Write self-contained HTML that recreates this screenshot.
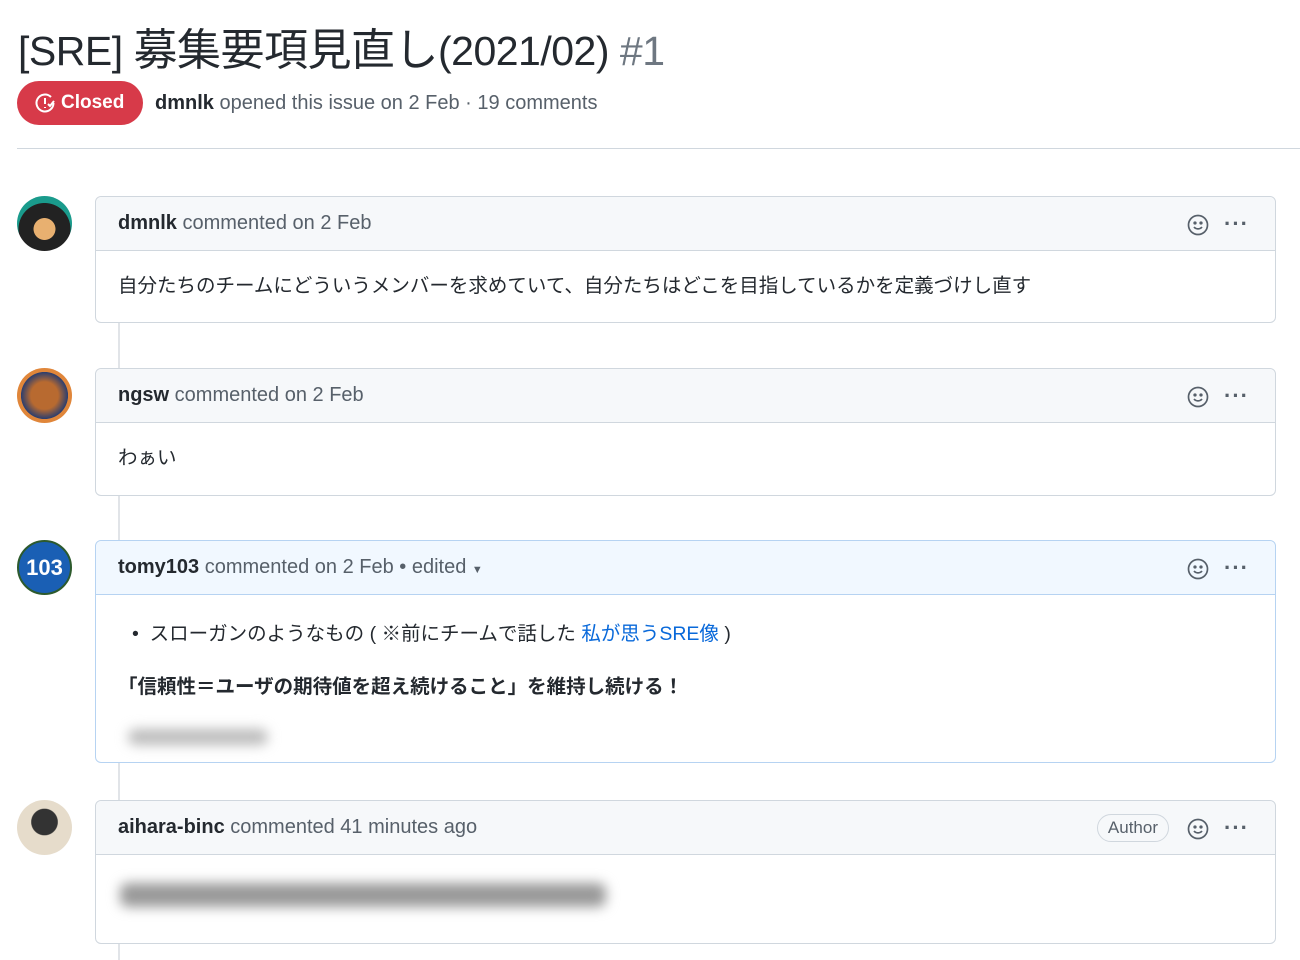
<!DOCTYPE html><html><head><meta charset="utf-8"><style>
body{margin:0;width:1300px;height:960px;overflow:hidden;background:#fff;font-family:"Liberation Sans","Noto Sans CJK JP",sans-serif;color:#24292f;position:relative}
.a{position:absolute}
h1{position:absolute;left:18px;top:14px;margin:0;font-weight:400;font-size:41px;letter-spacing:-0.5px;white-space:nowrap}
h1 .n{color:#6e7781}
h1 .j{font-size:44px}
.badge{left:17px;top:81px;width:126px;height:44px;border-radius:22px;background:#d73a49;color:#fff;font-size:19px;font-weight:700;line-height:44px}
.meta{left:155px;top:92px;font-size:20px;color:#57606a;white-space:nowrap}
.meta b{color:#24292f}
.hr{left:17px;top:148px;width:1283px;height:1px;background:#d0d7de}
.line{left:118px;width:2px;background:#e1e4e8}
.av{left:17px;width:55px;height:55px;border-radius:50%}
.box{left:95px;width:1179px;border:1px solid #d0d7de;border-radius:6px;background:#fff}
.hd{height:53px;background:#f6f8fa;border-bottom:1px solid #d0d7de;border-radius:6px 6px 0 0;font-size:20px;color:#57606a;line-height:53px;padding-left:22px;position:relative;white-space:nowrap}
.hd b{color:#24292f}
.blue{border-color:#b6d3f2}.blue .hd{background:#f1f8ff;border-color:#b6d3f2}
.ic{position:absolute;right:66px;top:17px}
.dots{position:absolute;right:26px;top:0;font-size:22px;color:#57606a;letter-spacing:1px;font-weight:700}
.bd{padding:0 22px;font-size:19.5px}
.blur{background:#bbb;filter:blur(6px);border-radius:8px}
</style></head><body>
<h1>[SRE] <span class="j">募集要項見直し</span>(2021/02) <span class="n">#1</span></h1>
<div class="a badge"><svg class="a" style="left:17px;top:11px" width="22" height="22" viewBox="0 0 22 22" fill="none" stroke="#fff" stroke-width="2"><path d="M17 5A8.5 8.5 0 1 0 19.5 11"/><path d="M11 6v6M11 15v1"/><path d="M14 12l2 2 4-5"/></svg><span class="a" style="left:44px">Closed</span></div>
<div class="a meta"><b>dmnlk</b> opened this issue on 2 Feb · 19 comments</div>
<div class="a hr"></div>
<div class="a line" style="top:322px;height:46px"></div>
<div class="a line" style="top:495px;height:45px"></div>
<div class="a line" style="top:762px;height:38px"></div>
<div class="a line" style="top:943px;height:17px"></div>

<div class="a av" style="top:196px;background:radial-gradient(circle at 50% 60%,#e8b070 0 25%,#222 26% 60%,#1a9b8c 61%)"></div>
<div class="a box" style="top:196px;height:125px"><div class="hd"><b>dmnlk</b> commented on 2 Feb<svg class="ic" width="22" height="22" viewBox="0 0 22 22" fill="none" stroke="#57606a" stroke-width="1.7"><circle cx="11" cy="11" r="9.5"/><circle cx="8" cy="9" r=".8" fill="#57606a"/><circle cx="14" cy="9" r=".8" fill="#57606a"/><path d="M7 13c2 2.5 6 2.5 8 0"/></svg><span class="dots">···</span></div><div class="bd" style="line-height:70px">自分たちのチームにどういうメンバーを求めていて、自分たちはどこを目指しているかを定義づけし直す</div></div>

<div class="a av" style="top:368px;background:radial-gradient(circle at 50% 50%,#b86a30 0 35%,#2c3e6e 60%,#e0863a 61%)"></div>
<div class="a box" style="top:368px;height:126px"><div class="hd"><b>ngsw</b> commented on 2 Feb<svg class="ic" width="22" height="22" viewBox="0 0 22 22" fill="none" stroke="#57606a" stroke-width="1.7"><circle cx="11" cy="11" r="9.5"/><circle cx="8" cy="9" r=".8" fill="#57606a"/><circle cx="14" cy="9" r=".8" fill="#57606a"/><path d="M7 13c2 2.5 6 2.5 8 0"/></svg><span class="dots">···</span></div><div class="bd" style="line-height:70px">わぁい</div></div>

<div class="a av" style="top:540px;background:#1a5fb4;border:2px solid #2d5a2d;width:51px;height:51px;color:#fff;text-align:center;font-size:22px;line-height:51px;font-weight:700">103</div>
<div class="a box blue" style="top:540px;height:221px"><div class="hd"><b>tomy103</b> commented on 2 Feb • edited <span style="font-size:11px">▼</span><svg class="ic" width="22" height="22" viewBox="0 0 22 22" fill="none" stroke="#57606a" stroke-width="1.7"><circle cx="11" cy="11" r="9.5"/><circle cx="8" cy="9" r=".8" fill="#57606a"/><circle cx="14" cy="9" r=".8" fill="#57606a"/><path d="M7 13c2 2.5 6 2.5 8 0"/></svg><span class="dots">···</span></div>
<div class="bd"><div style="margin-top:22px;padding-left:14px">•&nbsp;&nbsp;スローガンのようなもの ( ※前にチームで話した <span style="color:#0969da">私が思うSRE像</span> )</div>
<div style="margin-top:24px;font-weight:700">「信頼性＝ユーザの期待値を超え続けること」を維持し続ける！</div>
<div class="blur" style="margin-top:30px;width:140px;height:16px;margin-left:10px"></div></div></div>

<div class="a av" style="top:800px;background:radial-gradient(circle at 50% 40%,#333 0 30%,#e6dccb 32%)"></div>
<div class="a box" style="top:800px;height:142px"><div class="hd"><b>aihara-binc</b> commented 41 minutes ago<span style="position:absolute;right:106px;top:13px;height:26px;line-height:26px;padding:0 10px;border:1px solid #d0d7de;border-radius:14px;font-size:17px">Author</span><svg class="ic" width="22" height="22" viewBox="0 0 22 22" fill="none" stroke="#57606a" stroke-width="1.7"><circle cx="11" cy="11" r="9.5"/><circle cx="8" cy="9" r=".8" fill="#57606a"/><circle cx="14" cy="9" r=".8" fill="#57606a"/><path d="M7 13c2 2.5 6 2.5 8 0"/></svg><span class="dots">···</span></div>
<div class="blur" style="position:absolute;left:24px;top:82px;width:486px;height:24px;background:#999"></div></div>
</body></html>
